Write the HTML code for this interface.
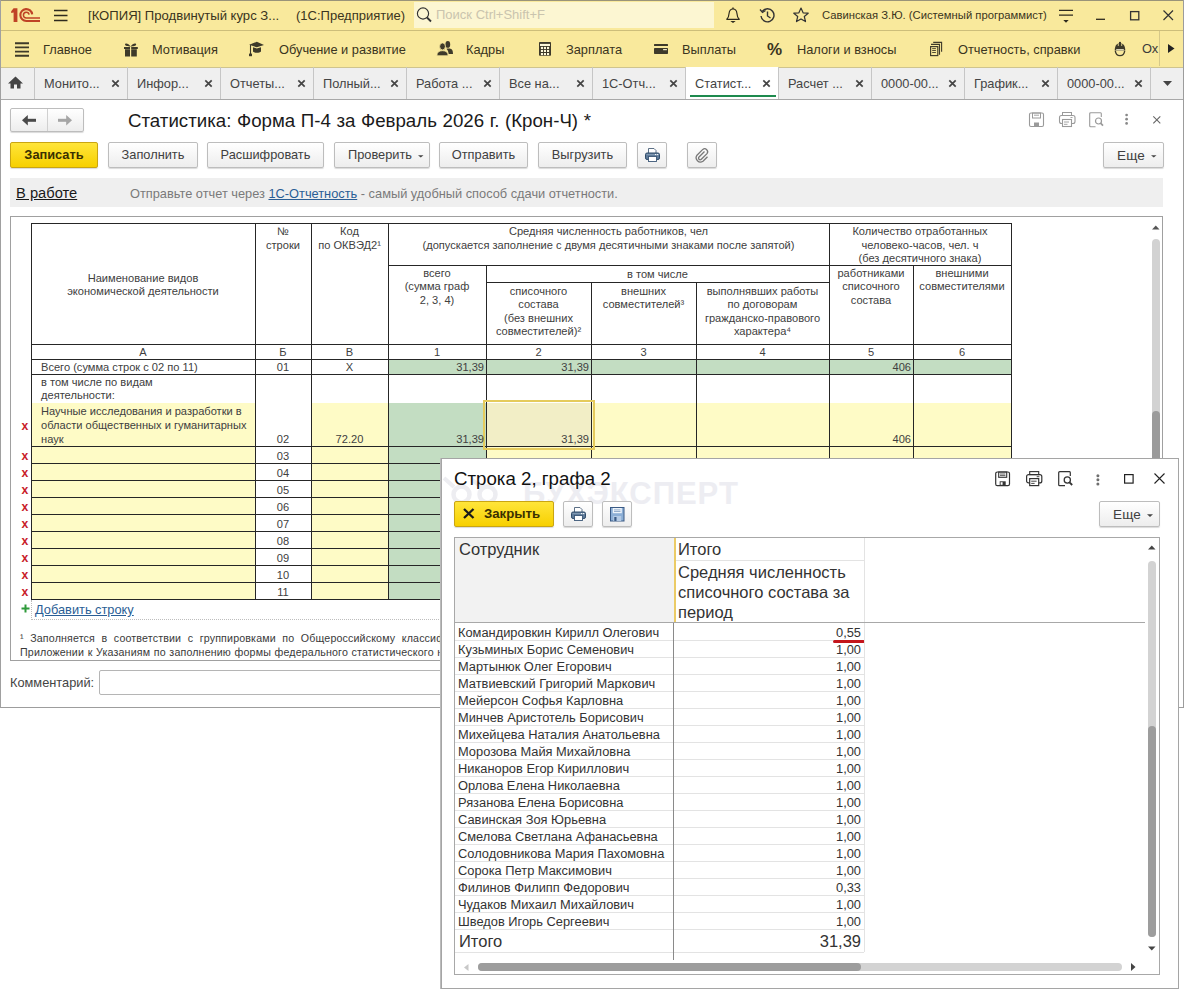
<!DOCTYPE html>
<html><head><meta charset="utf-8">
<style>
*{margin:0;padding:0;box-sizing:border-box}
html,body{width:1184px;height:989px;overflow:hidden;background:#fff;font-family:"Liberation Sans",sans-serif;color:#333}
.a{position:absolute;white-space:nowrap}
svg{position:absolute;overflow:visible}
#titlebar{position:absolute;left:0;top:0;width:1184px;height:31px;background:#F9E99C}
#titlebar::after{content:"";position:absolute;left:0;right:0;top:30px;height:1px;background:#CDBE7A}
#titlebar::before{content:"";position:absolute;left:0;right:0;top:0;height:1px;background:#9A9479}
#menubar{position:absolute;left:0;top:31px;width:1184px;height:36px;background:#F9E99C}
.mi{position:absolute;top:16px;font-size:12.8px;line-height:14px;color:#3a3420;white-space:nowrap}
#tabbar{position:absolute;left:0;top:67px;width:1184px;height:33px;background:#EFEFEF;border-bottom:1px solid #A8A8A8}
#tabbar::before{content:"";position:absolute;left:0;right:0;top:0;height:1px;background:#CFC48E}
.tab{position:absolute;top:0;height:32px;border-left:1px solid #C6C6C6;font-size:12.8px;color:#444}
.tab span{position:absolute;left:9px;top:9px;white-space:nowrap}
.tab svg{left:76px;top:12px}
.btn{position:absolute;height:25px;border:1px solid #BDBDBD;border-radius:2px;background:linear-gradient(#FFFFFF,#EDEDED);box-shadow:0 1px 1px rgba(0,0,0,0.15);font-size:12.8px;color:#404040;text-align:center;line-height:23px;white-space:nowrap}
.ybtn{background:linear-gradient(#FFE53A,#F7D000);border-color:#C9A512;color:#3A3000;font-weight:bold}
#main{position:absolute;left:0;top:100px;width:1184px;height:608px}
#main::before{content:"";position:absolute;left:0;top:0;width:1px;height:608px;background:#9D9D9D}
#main::after{content:"";position:absolute;left:0;top:607px;width:1184px;height:1px;background:#9D9D9D}
.t{position:absolute;font-size:11.1px;line-height:14px;color:#404040;white-space:nowrap}
.hl{position:absolute;height:1px;background:#222}
.vl{position:absolute;width:1px;background:#222}
.g{position:absolute;background:#C5DDC5}
.y{position:absolute;background:#FEFBC5}
.rx{position:absolute;left:21px;font-size:13px;font-weight:bold;color:#C8262A;line-height:12px}
</style></head><body>

<!-- ============ TITLE BAR ============ -->
<div id="titlebar">
  <svg style="left:0;top:0" width="45" height="30" viewBox="0 0 45 30">
    <path d="M13.6 8.2H17.4V22H13.6V12.6L11.2 13V11.2Z" fill="#BF4326"/>
    <path d="M32.2 14.3 A5.95 5.95 0 1 0 26.3 21 H40" fill="none" stroke="#BF4326" stroke-width="2.1"/>
    <path d="M29.1 14.6 A2.85 2.85 0 1 0 26.3 17.9 H40" fill="none" stroke="#BF4326" stroke-width="1.5"/>
  </svg>
  <svg style="left:54px;top:9px" width="14" height="13"><path d="M0 1.5H13.5M0 6.5H13.5M0 11.5H13.5" stroke="#2e2a1e" stroke-width="1.3"/></svg>
  <div class="a" style="left:88px;top:8px;font-size:13.1px;color:#3a3420">[КОПИЯ] Продвинутый курс З...</div>
  <div class="a" style="left:296px;top:8px;font-size:13px;color:#3a3420">(1С:Предприятие)</div>
  <div class="a" style="left:414px;top:2px;width:300px;height:26px;background:#FCF6D2"></div>
  <svg style="left:416px;top:6px" width="18" height="18"><circle cx="7" cy="7.5" r="5.6" fill="none" stroke="#333" stroke-width="1.15"/><path d="M11 11.5L15 15.5" stroke="#333" stroke-width="1.8"/></svg>
  <div class="a" style="left:436px;top:7px;font-size:13px;color:#CAC4AE">Поиск Ctrl+Shift+F</div>
  <!-- bell -->
  <svg style="left:726px;top:7px" width="16" height="17"><path d="M0.8 12.3 C2.8 10.5 2.9 9 3.1 6.2 C3.4 3 5 2 7 2 C9 2 10.6 3 10.9 6.2 C11.1 9 11.2 10.5 13.2 12.3 Z" fill="none" stroke="#2e2a1e" stroke-width="1.2" stroke-linejoin="round"/><path d="M7 0.5V2" stroke="#2e2a1e" stroke-width="1.4"/><path d="M4.3 14 H9.7 L7 15.9 Z" fill="#2e2a1e"/></svg>
  <!-- history -->
  <svg style="left:759px;top:7px" width="17" height="17"><path d="M3.2 4.5 A6.5 6.5 0 1 1 2 9" fill="none" stroke="#333" stroke-width="1.4"/><path d="M1 2.5 L3.5 5.5 L6.5 3.5" fill="none" stroke="#333" stroke-width="1.3"/><path d="M8.5 4.5V9L11.5 11" fill="none" stroke="#333" stroke-width="1.4"/></svg>
  <!-- star -->
  <svg style="left:793px;top:7px" width="17" height="17"><path d="M8 1 L10.1 5.8 L15.2 6.2 L11.3 9.5 L12.5 14.6 L8 11.9 L3.5 14.6 L4.7 9.5 L0.8 6.2 L5.9 5.8 Z" fill="none" stroke="#333" stroke-width="1.2" stroke-linejoin="round"/></svg>
  <div class="a" style="left:822px;top:9px;font-size:11.25px;color:#3a3420">Савинская З.Ю. (Системный программист)</div>
  <!-- filter -->
  <svg style="left:1059px;top:0px" width="15" height="25"><path d="M0 10.4H14M0 15.2H14" stroke="#2e2a1e" stroke-width="1.25"/><path d="M4.3 20H9.7L7 22.8Z" fill="#2e2a1e"/></svg>
  <svg style="left:1096px;top:0px" width="10" height="25"><path d="M0 19.3H9" stroke="#2e2a1e" stroke-width="1.3"/></svg>
  <svg style="left:1130px;top:11px" width="10" height="10"><rect x="0.6" y="0.6" width="8.2" height="8.2" fill="none" stroke="#333" stroke-width="1.3"/></svg>
  <svg style="left:1163px;top:10px" width="11" height="11"><path d="M0.5 0.5L10 10M10 0.5L0.5 10" stroke="#333" stroke-width="1.2"/></svg>
</div>

<!-- ============ MENU BAR ============ -->
<div id="menubar">
  <svg style="left:15px;top:11px" width="15" height="15"><path d="M0 1.2H14M0 5.4H14M0 9.6H14M0 13.8H14" stroke="#3e3a2a" stroke-width="1.9"/></svg>
  <div class="mi" style="left:43px;top:12px">Главное</div>
  <!-- gift -->
  <svg style="left:123px;top:10px" width="16" height="16"><path d="M1 6H7V8H1Z M8.2 6H14.8V8H8.2Z" fill="#3e3a2a"/><path d="M2 8.3H7V15.5H2Z M8.2 8.3H13.8V15.5H8.2Z" fill="#3e3a2a"/><path d="M7.6 5.5 C5.5 1.8 1.8 1.8 2 3.6 C2.2 5.2 5 5.5 7.6 5.5Z M7.6 5.5 C9.7 1.8 13.4 1.8 13.2 3.6 C13 5.2 10.2 5.5 7.6 5.5Z" fill="#3e3a2a"/></svg>
  <div class="mi" style="left:152px;top:12px">Мотивация</div>
  <!-- cap -->
  <svg style="left:248px;top:10px" width="18" height="17"><path d="M1.2 3.8 L8.8 0.8 L16 4 L8.8 6.3 Z" fill="#3e3a2a"/><path d="M5 6.2 L8.8 7.4 L13 6.2 V10.5 C11.5 12.3 6.5 12.3 5 10.5 Z" fill="#3e3a2a"/><path d="M2.5 3.8V13" stroke="#3e3a2a" stroke-width="1.1"/><path d="M1 12.6H4V15.2H1Z" fill="#3e3a2a"/></svg>
  <div class="mi" style="left:279px;top:12px">Обучение и развитие</div>
  <!-- people -->
  <svg style="left:436px;top:9px" width="19" height="17"><ellipse cx="11.8" cy="4.4" rx="2.4" ry="3.4" fill="#3e3a2a"/><path d="M10.4 8.7 C12 8.5 13.5 8.5 14.5 8.7 C16.2 9 17 10.5 17 13.9 H12.6 C12.4 11.5 11.6 9.8 10.4 8.7Z" fill="#3e3a2a"/><ellipse cx="6.5" cy="6.4" rx="2.9" ry="3.5" fill="#3e3a2a" stroke="#F9E99C" stroke-width="0.8"/><path d="M0.9 15.8 C0.9 12.2 2.8 10.7 6.5 10.7 C10.2 10.7 12.1 12.2 12.1 15.8 Z" fill="#3e3a2a" stroke="#F9E99C" stroke-width="0.8"/></svg>
  <div class="mi" style="left:466px;top:12px">Кадры</div>
  <!-- calc -->
  <svg style="left:539px;top:11px" width="12" height="14"><rect x="0" y="0" width="12" height="13.8" rx="0.8" fill="#3e3a2a"/><rect x="1" y="1.9" width="10" height="2.1" fill="#FDF8D8"/><rect x="1.9" y="4.9" width="2.1" height="2.1" fill="#FDF8D8"/><rect x="4.9" y="4.9" width="2.1" height="2.1" fill="#FDF8D8"/><rect x="8" y="4.9" width="2.1" height="2.1" fill="#FDF8D8"/><rect x="1.9" y="7.9" width="2.1" height="2.1" fill="#FDF8D8"/><rect x="4.9" y="7.9" width="2.1" height="2.1" fill="#FDF8D8"/><rect x="8" y="7.9" width="2.1" height="2.1" fill="#FDF8D8"/><rect x="1.9" y="11" width="2.1" height="2.1" fill="#FDF8D8"/><rect x="4.9" y="11" width="2.1" height="2.1" fill="#FDF8D8"/><rect x="8" y="11" width="2.1" height="2.1" fill="#FDF8D8"/></svg>
  <div class="mi" style="left:566px;top:12px">Зарплата</div>
  <!-- card -->
  <svg style="left:654px;top:13px" width="14" height="10"><rect x="0" y="0" width="14" height="2" rx="0.5" fill="#3e3a2a"/><rect x="0" y="4" width="14" height="6" rx="0.7" fill="#3e3a2a"/><rect x="9.1" y="5.1" width="3.8" height="1.1" fill="#FDF8D8"/></svg>
  <div class="mi" style="left:682px;top:12px">Выплаты</div>
  <div class="mi" style="left:767px;top:10px;font-size:17px;font-weight:bold;line-height:18px">%</div>
  <div class="mi" style="left:797px;top:12px">Налоги и взносы</div>
  <!-- docs -->
  <svg style="left:929px;top:10px" width="15" height="17"><path d="M4.2 1.4H12.6V10.8" fill="none" stroke="#3e3a2a" stroke-width="1.1"/><path d="M2 3.4H10.5V13.7" fill="none" stroke="#3e3a2a" stroke-width="1.1"/><rect x="1.6" y="5.6" width="7.2" height="9" fill="none" stroke="#3e3a2a" stroke-width="1.15"/><path d="M3.2 7.6H6.9M3.2 9.5H6.9M3.2 11.5H6.9" stroke="#3e3a2a" stroke-width="0.9"/></svg>
  <div class="mi" style="left:958px;top:12px">Отчетность, справки</div>
  <!-- helmet -->
  <svg style="left:1114px;top:10px" width="13" height="16"><path d="M0.7 9.6 C0.7 4.6 2.8 2.2 6 2.2 C9.2 2.2 11.3 4.6 11.3 9.6 Z" fill="#3e3a2a"/><path d="M4.3 2.6V5M7.7 2.6V5" stroke="#F9E99C" stroke-width="0.8"/><rect x="5" y="0.9" width="2" height="3" fill="#3e3a2a"/><rect x="2.2" y="8.2" width="7.6" height="1.1" fill="#FDF8D8"/><path d="M1.3 9.8 C1.7 13.2 3.6 14.6 6 14.6 C8.4 14.6 10.3 13.2 10.7 9.8" fill="none" stroke="#3e3a2a" stroke-width="1.3"/></svg>
  <div class="a" style="left:1142px;top:11px;width:17px;overflow:hidden;font-size:12.8px;line-height:14px;color:#3b3b3b">Ох</div>
  <div class="a" style="left:1159px;top:0;width:1px;height:35px;background:#D6C889"></div>
  <svg style="left:1168px;top:13px" width="7" height="10"><path d="M0 0L6.5 4.5L0 9Z" fill="#222"/></svg>
</div>

<!-- ============ TAB BAR ============ -->
<div id="tabbar">
  <svg style="left:8px;top:9px" width="15" height="13"><path d="M7.5 0.5 L15 7.5 H12.5 V12.5 H9 V8.5 H6 V12.5 H2.5 V7.5 H0Z" fill="#444"/></svg>
  <div class="tab" style="left:34px;width:93px"><span>Монито...</span><svg width="9" height="9"><path d="M1.3 1.3L7.7 7.7M7.7 1.3L1.3 7.7" stroke="#444" stroke-width="1.7"/></svg></div>
  <div class="tab" style="left:127px;width:93px"><span>Инфор...</span><svg width="9" height="9"><path d="M1.3 1.3L7.7 7.7M7.7 1.3L1.3 7.7" stroke="#444" stroke-width="1.7"/></svg></div>
  <div class="tab" style="left:220px;width:93px"><span>Отчеты...</span><svg width="9" height="9"><path d="M1.3 1.3L7.7 7.7M7.7 1.3L1.3 7.7" stroke="#444" stroke-width="1.7"/></svg></div>
  <div class="tab" style="left:313px;width:93px"><span>Полный...</span><svg width="9" height="9"><path d="M1.3 1.3L7.7 7.7M7.7 1.3L1.3 7.7" stroke="#444" stroke-width="1.7"/></svg></div>
  <div class="tab" style="left:406px;width:93px"><span>Работа ...</span><svg width="9" height="9"><path d="M1.3 1.3L7.7 7.7M7.7 1.3L1.3 7.7" stroke="#444" stroke-width="1.7"/></svg></div>
  <div class="tab" style="left:499px;width:93px"><span>Все на...</span><svg width="9" height="9"><path d="M1.3 1.3L7.7 7.7M7.7 1.3L1.3 7.7" stroke="#444" stroke-width="1.7"/></svg></div>
  <div class="tab" style="left:592px;width:93px"><span>1С-Отч...</span><svg width="9" height="9"><path d="M1.3 1.3L7.7 7.7M7.7 1.3L1.3 7.7" stroke="#444" stroke-width="1.7"/></svg></div>
  <div class="tab" style="left:685px;width:93px;background:#fff"><span>Статист...</span><svg width="9" height="9"><path d="M1.3 1.3L7.7 7.7M7.7 1.3L1.3 7.7" stroke="#444" stroke-width="1.7"/></svg><div class="a" style="left:4px;top:28px;width:86px;height:2px;background:#1E8A4E"></div></div>
  <div class="tab" style="left:778px;width:93px"><span>Расчет ...</span><svg width="9" height="9"><path d="M1.3 1.3L7.7 7.7M7.7 1.3L1.3 7.7" stroke="#444" stroke-width="1.7"/></svg></div>
  <div class="tab" style="left:871px;width:93px"><span>0000-00...</span><svg width="9" height="9"><path d="M1.3 1.3L7.7 7.7M7.7 1.3L1.3 7.7" stroke="#444" stroke-width="1.7"/></svg></div>
  <div class="tab" style="left:964px;width:93px"><span>График...</span><svg width="9" height="9"><path d="M1.3 1.3L7.7 7.7M7.7 1.3L1.3 7.7" stroke="#444" stroke-width="1.7"/></svg></div>
  <div class="tab" style="left:1057px;width:93px"><span>0000-00...</span><svg width="9" height="9"><path d="M1.3 1.3L7.7 7.7M7.7 1.3L1.3 7.7" stroke="#444" stroke-width="1.7"/></svg></div>
  <div class="tab" style="left:1150px;width:32px"><svg style="left:12px;top:14px" width="9" height="6"><path d="M0 0H9L4.5 5Z" fill="#444"/></svg></div>
</div>

<div class="a" style="left:0;top:0;width:1px;height:708px;background:#A0A0A0;z-index:5"></div>
<div class="a" style="left:1183px;top:0;width:1px;height:708px;background:#9C9C9C;z-index:5"></div>
<!-- ============ MAIN FORM ============ -->
<div id="main">
  <!-- nav -->
  <div class="btn" style="left:10px;top:8px;width:74px;height:24px"></div>
  <div class="a" style="left:47px;top:9px;width:1px;height:22px;background:#D0D0D0"></div>
  <svg style="left:22px;top:15px" width="15" height="11"><path d="M14 5.3H4" stroke="#4a4a4a" stroke-width="3"/><path d="M0 5.3L5.8 0V10.6Z" fill="#4a4a4a"/></svg>
  <svg style="left:58px;top:15px" width="15" height="11"><path d="M0 5.3H10" stroke="#A5A5A5" stroke-width="3"/><path d="M14 5.3L8.2 0V10.6Z" fill="#A5A5A5"/></svg>
  <div class="a" style="left:128px;top:10px;font-size:18.7px;word-spacing:0.4px;color:#1a1a1a">Статистика: Форма П-4 за Февраль 2026 г. (Крон-Ч) *</div>
  <!-- right icons -->
  <svg style="left:1029px;top:12px" width="16" height="16"><rect x="0.5" y="1" width="14" height="13.5" rx="1.5" fill="none" stroke="#9a9a9a" stroke-width="1.1"/><rect x="3.5" y="1" width="8" height="5" fill="none" stroke="#9a9a9a" stroke-width="1"/><path d="M5 3.2H10" stroke="#9a9a9a" stroke-width="0.9"/><rect x="5" y="10.5" width="5" height="4" fill="#9a9a9a"/></svg>
  <svg style="left:1059px;top:12px" width="17" height="16"><rect x="3.5" y="0.5" width="9" height="3" fill="none" stroke="#9a9a9a" stroke-width="1"/><rect x="0.5" y="3.5" width="15.5" height="8" rx="2" fill="none" stroke="#9a9a9a" stroke-width="1.1"/><rect x="3.5" y="7.5" width="9" height="7" fill="#fff" stroke="#9a9a9a" stroke-width="1.1"/><path d="M5 10H10M5 12.3H8.5M11.5 5.5H13.5" stroke="#9a9a9a" stroke-width="0.9"/></svg>
  <svg style="left:1089px;top:12px" width="16" height="16"><path d="M12.3 5V1.5A1 1 0 0 0 11.3 0.7H1.7A1 1 0 0 0 0.7 1.7V13.7A1 1 0 0 0 1.7 14.7H6.5" fill="none" stroke="#9a9a9a" stroke-width="1.1"/><circle cx="9.5" cy="9" r="3" fill="none" stroke="#9a9a9a" stroke-width="1.2"/><path d="M11.6 11.2L14 13.6" stroke="#9a9a9a" stroke-width="1.7"/></svg>
  <svg style="left:1125px;top:13px" width="4" height="12"><circle cx="1.6" cy="2" r="1.35" fill="#888"/><circle cx="1.6" cy="6.2" r="1.35" fill="#888"/><circle cx="1.6" cy="10.4" r="1.35" fill="#888"/></svg>
  <svg style="left:1153px;top:16px" width="8" height="8"><path d="M0.3 0.3L7.3 7.3M7.3 0.3L0.3 7.3" stroke="#666" stroke-width="1.1"/></svg>

  <!-- toolbar -->
  <div class="btn ybtn" style="left:10px;top:42px;height:26px;line-height:24px;width:88px">Записать</div>
  <div class="btn" style="left:108px;top:42px;height:26px;line-height:24px;width:90px">Заполнить</div>
  <div class="btn" style="left:207px;top:42px;height:26px;line-height:24px;width:117px">Расшифровать</div>
  <div class="btn" style="left:334px;top:42px;height:26px;line-height:24px;width:96px;text-align:left;padding-left:13px">Проверить</div>
  <svg style="left:417.5px;top:55px" width="6" height="4"><path d="M0 0.2H5.5L2.75 2.6Z" fill="#444"/></svg>
  <div class="btn" style="left:439px;top:42px;height:26px;line-height:24px;width:89px">Отправить</div>
  <div class="btn" style="left:538px;top:42px;height:26px;line-height:24px;width:89px">Выгрузить</div>
  <div class="btn" style="left:637px;top:42px;height:26px;line-height:24px;width:30px"></div>
  <svg style="left:645px;top:48px" width="16" height="15"><path d="M3.5 0.5H9L11 2.5V5.5H3.5Z" fill="#fff" stroke="#4A6078" stroke-width="0.9"/><rect x="0.5" y="5" width="14" height="6.5" rx="1.6" fill="#5F7B99" stroke="#2F4B69" stroke-width="1"/><path d="M1.5 6.6H13.5" stroke="#8DA3BA" stroke-width="0.8"/><rect x="10" y="6.1" width="1.2" height="1" fill="#fff"/><rect x="12" y="6.1" width="1.2" height="1" fill="#fff"/><rect x="3.5" y="8.5" width="8" height="5" fill="#fff" stroke="#3A5575" stroke-width="0.9"/></svg>
  <div class="btn" style="left:687px;top:42px;height:26px;line-height:24px;width:30px"></div>
  <svg style="left:695px;top:48px" width="14" height="14"><path d="M9.5 3.5 L4 9 A1.6 1.6 0 0 0 6.3 11.3 L12 5.6 A3 3 0 0 0 7.8 1.4 L2 7.2 A4.3 4.3 0 0 0 8 13.2 L12.5 8.7" fill="none" stroke="#777" stroke-width="1.3"/></svg>
  <div class="btn" style="left:1103px;top:42px;height:26px;line-height:25px;width:61px;text-align:left;padding-left:13px;font-size:13.5px;letter-spacing:0.2px">Еще</div>
  <svg style="left:1151px;top:55px" width="6" height="4"><path d="M0 0.2H5.5L2.75 2.6Z" fill="#444"/></svg>

  <!-- status bar -->
  <div class="a" style="left:10px;top:78px;width:1153px;height:29px;background:#EFEFEF"></div>
  <div class="a" style="left:16px;top:85px;font-size:14.7px;color:#1a1a1a;text-decoration:underline">В работе</div>
  <div class="a" style="left:130px;top:86px;font-size:12.8px;color:#7a7a7a">Отправьте отчет через <span style="color:#2A5E95;text-decoration:underline">1С-Отчетность</span> - самый удобный способ сдачи отчетности.</div>

  <!-- spreadsheet box -->
  <div class="a" style="left:10px;top:116px;width:1153px;height:445px;border:1px solid #A0A0A0;overflow:hidden">
    <div id="sheet" class="a" style="left:-11px;top:-217px;width:1184px;height:989px">
<!--SHEET_START-->
<div class="a" style="left:389px;top:360px;width:622px;height:14px;background:#C3DDC2"></div>
<div class="a" style="left:32px;top:403px;width:223px;height:43px;background:#FEFBC6"></div>
<div class="a" style="left:312px;top:403px;width:76px;height:43px;background:#FEFBC6"></div>
<div class="a" style="left:389px;top:403px;width:97px;height:43px;background:#C3DDC2"></div>
<div class="a" style="left:487px;top:403px;width:524px;height:43px;background:#FEFBC6"></div>
<div class="a" style="left:487px;top:403px;width:104px;height:43px;background:#F2EEC6"></div>
<div class="a" style="left:32px;top:447px;width:223px;height:16px;background:#FEFBC6"></div>
<div class="a" style="left:312px;top:447px;width:76px;height:16px;background:#FEFBC6"></div>
<div class="a" style="left:389px;top:447px;width:97px;height:16px;background:#C3DDC2"></div>
<div class="a" style="left:487px;top:447px;width:524px;height:16px;background:#FEFBC6"></div>
<div class="a" style="left:32px;top:464px;width:223px;height:16px;background:#FEFBC6"></div>
<div class="a" style="left:312px;top:464px;width:76px;height:16px;background:#FEFBC6"></div>
<div class="a" style="left:389px;top:464px;width:97px;height:16px;background:#C3DDC2"></div>
<div class="a" style="left:487px;top:464px;width:524px;height:16px;background:#FEFBC6"></div>
<div class="a" style="left:32px;top:481px;width:223px;height:16px;background:#FEFBC6"></div>
<div class="a" style="left:312px;top:481px;width:76px;height:16px;background:#FEFBC6"></div>
<div class="a" style="left:389px;top:481px;width:97px;height:16px;background:#C3DDC2"></div>
<div class="a" style="left:487px;top:481px;width:524px;height:16px;background:#FEFBC6"></div>
<div class="a" style="left:32px;top:498px;width:223px;height:16px;background:#FEFBC6"></div>
<div class="a" style="left:312px;top:498px;width:76px;height:16px;background:#FEFBC6"></div>
<div class="a" style="left:389px;top:498px;width:97px;height:16px;background:#C3DDC2"></div>
<div class="a" style="left:487px;top:498px;width:524px;height:16px;background:#FEFBC6"></div>
<div class="a" style="left:32px;top:515px;width:223px;height:16px;background:#FEFBC6"></div>
<div class="a" style="left:312px;top:515px;width:76px;height:16px;background:#FEFBC6"></div>
<div class="a" style="left:389px;top:515px;width:97px;height:16px;background:#C3DDC2"></div>
<div class="a" style="left:487px;top:515px;width:524px;height:16px;background:#FEFBC6"></div>
<div class="a" style="left:32px;top:532px;width:223px;height:16px;background:#FEFBC6"></div>
<div class="a" style="left:312px;top:532px;width:76px;height:16px;background:#FEFBC6"></div>
<div class="a" style="left:389px;top:532px;width:97px;height:16px;background:#C3DDC2"></div>
<div class="a" style="left:487px;top:532px;width:524px;height:16px;background:#FEFBC6"></div>
<div class="a" style="left:32px;top:549px;width:223px;height:16px;background:#FEFBC6"></div>
<div class="a" style="left:312px;top:549px;width:76px;height:16px;background:#FEFBC6"></div>
<div class="a" style="left:389px;top:549px;width:97px;height:16px;background:#C3DDC2"></div>
<div class="a" style="left:487px;top:549px;width:524px;height:16px;background:#FEFBC6"></div>
<div class="a" style="left:32px;top:566px;width:223px;height:16px;background:#FEFBC6"></div>
<div class="a" style="left:312px;top:566px;width:76px;height:16px;background:#FEFBC6"></div>
<div class="a" style="left:389px;top:566px;width:97px;height:16px;background:#C3DDC2"></div>
<div class="a" style="left:487px;top:566px;width:524px;height:16px;background:#FEFBC6"></div>
<div class="a" style="left:32px;top:583px;width:223px;height:16px;background:#FEFBC6"></div>
<div class="a" style="left:312px;top:583px;width:76px;height:16px;background:#FEFBC6"></div>
<div class="a" style="left:389px;top:583px;width:97px;height:16px;background:#C3DDC2"></div>
<div class="a" style="left:487px;top:583px;width:524px;height:16px;background:#FEFBC6"></div>
<div class="a" style="left:31px;top:223px;width:981px;height:1px;background:#262626"></div>
<div class="a" style="left:388px;top:265px;width:624px;height:1px;background:#262626"></div>
<div class="a" style="left:486px;top:282px;width:344px;height:1px;background:#262626"></div>
<div class="a" style="left:31px;top:344px;width:981px;height:1px;background:#262626"></div>
<div class="a" style="left:31px;top:359px;width:981px;height:1px;background:#262626"></div>
<div class="a" style="left:31px;top:374px;width:981px;height:1px;background:#262626"></div>
<div class="a" style="left:31px;top:446px;width:981px;height:1px;background:#262626"></div>
<div class="a" style="left:31px;top:463px;width:981px;height:1px;background:#262626"></div>
<div class="a" style="left:31px;top:480px;width:981px;height:1px;background:#262626"></div>
<div class="a" style="left:31px;top:497px;width:981px;height:1px;background:#262626"></div>
<div class="a" style="left:31px;top:514px;width:981px;height:1px;background:#262626"></div>
<div class="a" style="left:31px;top:531px;width:981px;height:1px;background:#262626"></div>
<div class="a" style="left:31px;top:548px;width:981px;height:1px;background:#262626"></div>
<div class="a" style="left:31px;top:565px;width:981px;height:1px;background:#262626"></div>
<div class="a" style="left:31px;top:582px;width:981px;height:1px;background:#262626"></div>
<div class="a" style="left:31px;top:599px;width:981px;height:1px;background:#262626"></div>
<div class="a" style="left:31px;top:223px;width:1px;height:377px;background:#262626"></div>
<div class="a" style="left:255px;top:223px;width:1px;height:377px;background:#262626"></div>
<div class="a" style="left:311px;top:223px;width:1px;height:377px;background:#262626"></div>
<div class="a" style="left:388px;top:223px;width:1px;height:377px;background:#262626"></div>
<div class="a" style="left:486px;top:265px;width:1px;height:335px;background:#262626"></div>
<div class="a" style="left:591px;top:282px;width:1px;height:318px;background:#262626"></div>
<div class="a" style="left:696px;top:282px;width:1px;height:318px;background:#262626"></div>
<div class="a" style="left:829px;top:223px;width:1px;height:377px;background:#262626"></div>
<div class="a" style="left:913px;top:265px;width:1px;height:335px;background:#262626"></div>
<div class="a" style="left:1011px;top:223px;width:1px;height:377px;background:#262626"></div>
<div class="a" style="left:483px;top:400px;width:112px;height:50px;border:2px solid #E5CB5C"></div>
<div class="t" style="left:31px;top:270.7px;width:224px;text-align:center">Наименование видов</div>
<div class="t" style="left:31px;top:284.2px;width:224px;text-align:center">экономической деятельности</div>
<div class="t" style="left:255px;top:224.4px;width:56px;text-align:center">№</div>
<div class="t" style="left:255px;top:238.0px;width:56px;text-align:center">строки</div>
<div class="t" style="left:311px;top:224.4px;width:77px;text-align:center">Код</div>
<div class="t" style="left:311px;top:238.0px;width:77px;text-align:center">по ОКВЭД2¹</div>
<div class="t" style="left:388px;top:224.4px;width:441px;text-align:center">Средняя численность работников, чел</div>
<div class="t" style="left:388px;top:238.0px;width:441px;text-align:center">(допускается заполнение с двумя десятичными знаками после запятой)</div>
<div class="t" style="left:829px;top:224.4px;width:182px;text-align:center">Количество отработанных</div>
<div class="t" style="left:829px;top:237.9px;width:182px;text-align:center">человеко-часов, чел. ч</div>
<div class="t" style="left:829px;top:251.4px;width:182px;text-align:center">(без десятичного знака)</div>
<div class="t" style="left:388px;top:265.6px;width:98px;text-align:center">всего</div>
<div class="t" style="left:388px;top:279.1px;width:98px;text-align:center">(сумма граф</div>
<div class="t" style="left:388px;top:292.6px;width:98px;text-align:center">2, 3, 4)</div>
<div class="t" style="left:486px;top:267.1px;width:343px;text-align:center">в том числе</div>
<div class="t" style="left:486px;top:283.6px;width:105px;text-align:center">списочного</div>
<div class="t" style="left:486px;top:297.1px;width:105px;text-align:center">состава</div>
<div class="t" style="left:486px;top:310.6px;width:105px;text-align:center">(без внешних</div>
<div class="t" style="left:486px;top:324.1px;width:105px;text-align:center">совместителей)²</div>
<div class="t" style="left:591px;top:283.6px;width:105px;text-align:center">внешних</div>
<div class="t" style="left:591px;top:297.1px;width:105px;text-align:center">совместителей³</div>
<div class="t" style="left:696px;top:283.6px;width:133px;text-align:center">выполнявших работы</div>
<div class="t" style="left:696px;top:297.1px;width:133px;text-align:center">по договорам</div>
<div class="t" style="left:696px;top:310.6px;width:133px;text-align:center">гражданско-правового</div>
<div class="t" style="left:696px;top:324.1px;width:133px;text-align:center">характера⁴</div>
<div class="t" style="left:829px;top:265.6px;width:84px;text-align:center">работниками</div>
<div class="t" style="left:829px;top:279.1px;width:84px;text-align:center">списочного</div>
<div class="t" style="left:829px;top:292.6px;width:84px;text-align:center">состава</div>
<div class="t" style="left:913px;top:265.6px;width:98px;text-align:center">внешними</div>
<div class="t" style="left:913px;top:279.1px;width:98px;text-align:center">совместителями</div>
<div class="t" style="left:31px;top:345.1px;width:224px;text-align:center">А</div>
<div class="t" style="left:255px;top:345.1px;width:56px;text-align:center">Б</div>
<div class="t" style="left:311px;top:345.1px;width:77px;text-align:center">В</div>
<div class="t" style="left:388px;top:345.1px;width:98px;text-align:center">1</div>
<div class="t" style="left:486px;top:345.1px;width:105px;text-align:center">2</div>
<div class="t" style="left:591px;top:345.1px;width:105px;text-align:center">3</div>
<div class="t" style="left:696px;top:345.1px;width:133px;text-align:center">4</div>
<div class="t" style="left:829px;top:345.1px;width:84px;text-align:center">5</div>
<div class="t" style="left:913px;top:345.1px;width:98px;text-align:center">6</div>
<div class="t" style="left:41px;top:360.1px">Всего (сумма строк с 02 по 11)</div>
<div class="t" style="left:255px;top:360.1px;width:56px;text-align:center">01</div>
<div class="t" style="left:311px;top:360.1px;width:77px;text-align:center">X</div>
<div class="t" style="left:284px;top:360.1px;width:200px;text-align:right">31,39</div>
<div class="t" style="left:389px;top:360.1px;width:200px;text-align:right">31,39</div>
<div class="t" style="left:711px;top:360.1px;width:200px;text-align:right">406</div>
<div class="t" style="left:41px;top:374.6px">в том числе по видам</div>
<div class="t" style="left:41px;top:388.1px">деятельности:</div>
<div class="t" style="left:41px;top:404.0px">Научные исследования и разработки в</div>
<div class="t" style="left:41px;top:418.1px">области общественных и гуманитарных</div>
<div class="t" style="left:41px;top:431.7px">наук</div>
<div class="t" style="left:255px;top:431.7px;width:56px;text-align:center">02</div>
<div class="t" style="left:311px;top:431.7px;width:77px;text-align:center">72.20</div>
<div class="t" style="left:284px;top:431.7px;width:200px;text-align:right">31,39</div>
<div class="t" style="left:389px;top:431.7px;width:200px;text-align:right">31,39</div>
<div class="t" style="left:711px;top:431.7px;width:200px;text-align:right">406</div>
<div class="t" style="left:255px;top:448.6px;width:56px;text-align:center">03</div>
<div class="t" style="left:255px;top:465.6px;width:56px;text-align:center">04</div>
<div class="t" style="left:255px;top:482.6px;width:56px;text-align:center">05</div>
<div class="t" style="left:255px;top:499.6px;width:56px;text-align:center">06</div>
<div class="t" style="left:255px;top:516.6px;width:56px;text-align:center">07</div>
<div class="t" style="left:255px;top:533.6px;width:56px;text-align:center">08</div>
<div class="t" style="left:255px;top:550.6px;width:56px;text-align:center">09</div>
<div class="t" style="left:255px;top:567.6px;width:56px;text-align:center">10</div>
<div class="t" style="left:255px;top:584.6px;width:56px;text-align:center">11</div>
<div class="a" style="left:21.5px;top:419.0px;font-size:12.2px;line-height:14px;font-weight:bold;color:#C8202A">x</div>
<div class="a" style="left:21.5px;top:449.0px;font-size:12.2px;line-height:14px;font-weight:bold;color:#C8202A">x</div>
<div class="a" style="left:21.5px;top:466.0px;font-size:12.2px;line-height:14px;font-weight:bold;color:#C8202A">x</div>
<div class="a" style="left:21.5px;top:483.0px;font-size:12.2px;line-height:14px;font-weight:bold;color:#C8202A">x</div>
<div class="a" style="left:21.5px;top:500.0px;font-size:12.2px;line-height:14px;font-weight:bold;color:#C8202A">x</div>
<div class="a" style="left:21.5px;top:517.0px;font-size:12.2px;line-height:14px;font-weight:bold;color:#C8202A">x</div>
<div class="a" style="left:21.5px;top:534.0px;font-size:12.2px;line-height:14px;font-weight:bold;color:#C8202A">x</div>
<div class="a" style="left:21.5px;top:551.0px;font-size:12.2px;line-height:14px;font-weight:bold;color:#C8202A">x</div>
<div class="a" style="left:21.5px;top:568.0px;font-size:12.2px;line-height:14px;font-weight:bold;color:#C8202A">x</div>
<div class="a" style="left:21.5px;top:585.0px;font-size:12.2px;line-height:14px;font-weight:bold;color:#C8202A">x</div>
<svg style="left:20.5px;top:604px" width="9" height="9"><path d="M4.5 0.5V8.5M0.5 4.5H8.5" stroke="#2E9A3A" stroke-width="2"/></svg>
<div class="a" style="left:35px;top:602px;font-size:12.8px;color:#2A5E95;text-decoration:underline">Добавить строку</div>
<div class="a" style="left:31px;top:600px;width:1120px;height:20px;border-left:1px dotted #BDBDBD;border-bottom:1px dotted #BDBDBD"></div>
<div class="a" style="left:20px;top:631.5px;font-size:10.67px;color:#3a3a3a;letter-spacing:0.15px;word-spacing:3.4px">¹ Заполняется в соответствии с группировками по Общероссийскому классификатору видов экономической деятельности</div>
<div class="a" style="left:20px;top:645.5px;font-size:10.67px;color:#3a3a3a;letter-spacing:0.15px;word-spacing:0.5px">Приложении к Указаниям по заполнению формы федерального статистического наблюдения</div>
<svg style="left:1152px;top:225px" width="8" height="5"><path d="M0 4.5H7.5L3.75 0.5Z" fill="#555"/></svg>
<div class="a" style="left:1152px;top:239px;width:8px;height:430px;border-radius:4px;background:#D2D2D2"></div>
<div class="a" style="left:1152px;top:411px;width:8px;height:258px;border-radius:4px;background:#9B9B9B"></div>
<!--SHEET_END-->
    </div>
  </div>

  <div class="a" style="left:10px;top:575px;font-size:12.8px;color:#444">Комментарий:</div>
  <div class="a" style="left:99px;top:570px;width:1080px;height:25px;border:1px solid #B5B5B5;border-radius:2px;background:#fff"></div>
</div>

<!--POPUP_START-->
<div id="popup" class="a" style="left:441px;top:458px;width:738px;height:531px;background:#fff;border:1px solid #A5A5A5;box-shadow:-1px 0 0 #BBBBBB, 0 1px 0 #BBBBBB">
<div id="pp" class="a" style="left:-442px;top:-459px;width:1184px;height:989px">
<div class="a" style="left:523px;top:476px;font-size:31px;font-weight:bold;color:#EDEDF2;letter-spacing:1px">БУХЭКСПЕРТ</div>
<svg style="left:442px;top:470px" width="60" height="40"><path d="M2 8 L12 17 M30 10 L40 17" stroke="#EDEDF1" stroke-width="4"/><circle cx="19.5" cy="24.5" r="8" fill="none" stroke="#EDEDF1" stroke-width="4.5"/><circle cx="45.5" cy="24.5" r="8" fill="none" stroke="#EDEDF1" stroke-width="4.5"/></svg>
<div class="a" style="left:454px;top:467.5px;font-size:18.7px;color:#111">Строка 2, графа 2</div>
<svg style="left:995px;top:471px" width="16" height="16"><rect x="0.7" y="1" width="13.8" height="13.6" rx="1.6" fill="none" stroke="#333" stroke-width="1.2"/><rect x="3.7" y="1" width="8" height="5.3" fill="none" stroke="#333" stroke-width="1.1"/><path d="M5 3H10.4M5 4.6H10.4" stroke="#333" stroke-width="0.8"/><rect x="4.7" y="10.3" width="6" height="4.3" fill="#333"/><rect x="5.6" y="11.2" width="2" height="2.6" fill="#fff"/></svg>
<svg style="left:1026px;top:471px" width="17" height="16"><rect x="3.7" y="0.6" width="9" height="3" fill="none" stroke="#333" stroke-width="1.1"/><rect x="0.6" y="3.6" width="15.2" height="8.3" rx="2" fill="none" stroke="#333" stroke-width="1.2"/><rect x="3.7" y="7.6" width="9" height="7" fill="#fff" stroke="#333" stroke-width="1.2"/><path d="M5.2 10.2H10.6M5.2 12.4H8.6M10.7 5.7H13.4" stroke="#333" stroke-width="0.9"/></svg>
<svg style="left:1058px;top:471px" width="16" height="16"><path d="M12.3 5V1.5A1 1 0 0 0 11.3 0.7H1.7A1 1 0 0 0 0.7 1.7V13.7A1 1 0 0 0 1.7 14.7H7" fill="none" stroke="#333" stroke-width="1.2"/><circle cx="9.3" cy="9" r="3.1" fill="none" stroke="#333" stroke-width="1.25"/><path d="M11.5 11.3L14.2 14" stroke="#333" stroke-width="1.8"/></svg>
<svg style="left:1095.5px;top:473.5px" width="4" height="12"><circle cx="1.9" cy="1.7" r="1.5" fill="#6f6f6f"/><circle cx="1.9" cy="5.8" r="1.5" fill="#6f6f6f"/><circle cx="1.9" cy="9.9" r="1.5" fill="#6f6f6f"/></svg>
<svg style="left:1124px;top:474px" width="10" height="10"><rect x="0.6" y="0.6" width="8.5" height="8.5" fill="none" stroke="#222" stroke-width="1.2"/></svg>
<svg style="left:1154px;top:473px" width="11" height="11"><path d="M0.5 0.5L10.5 10.5M10.5 0.5L0.5 10.5" stroke="#222" stroke-width="1.1"/></svg>
<div class="btn ybtn" style="left:454px;top:501px;width:100px;height:26px;text-align:left;padding-left:29px;line-height:24px;font-size:13.2px">Закрыть</div>
<svg style="left:463px;top:508px" width="12" height="11"><path d="M1 1L10.5 10M10.5 1L1 10" stroke="#1a1a1a" stroke-width="2.3"/></svg>
<div class="btn" style="left:563px;top:501px;width:30px;height:26px"></div>
<svg style="left:571px;top:507px" width="16" height="15"><path d="M3.5 0.5H9L11 2.5V5.5H3.5Z" fill="#fff" stroke="#4A6078" stroke-width="0.9"/><rect x="0.5" y="5" width="14" height="6.5" rx="1.6" fill="#5F7B99" stroke="#2F4B69" stroke-width="1"/><path d="M1.5 6.6H13.5" stroke="#8DA3BA" stroke-width="0.8"/><rect x="10" y="6.1" width="1.2" height="1" fill="#fff"/><rect x="12" y="6.1" width="1.2" height="1" fill="#fff"/><rect x="3.5" y="8.5" width="8" height="5" fill="#fff" stroke="#3A5575" stroke-width="0.9"/></svg>
<div class="btn" style="left:602px;top:501px;width:30px;height:26px"></div>
<svg style="left:610px;top:507px" width="15" height="15"><rect x="0.5" y="0.5" width="13.5" height="13.5" fill="#8DAFD6" stroke="#3A5A85" stroke-width="1"/><rect x="2.8" y="1" width="9" height="5.2" fill="#EEF4FA"/><path d="M4 2.9H10.5M4 4.5H10.5" stroke="#7E9CC0" stroke-width="0.8"/><rect x="3.2" y="9" width="8" height="5" fill="#B5CBE5"/><rect x="4.3" y="10" width="2.2" height="4" fill="#3A5A85"/></svg>
<div class="btn" style="left:1099px;top:501px;width:61px;height:26px;text-align:left;padding-left:13px;line-height:25px;font-size:13.5px;letter-spacing:0.2px">Еще</div>
<svg style="left:1147px;top:514px" width="6" height="4"><path d="M0 0.2H6L3 3Z" fill="#444"/></svg>
<div class="a" style="left:454px;top:537px;width:706px;height:438px;border:1px solid #A8A8A8"></div>
<div class="a" style="left:455px;top:538px;width:219px;height:85px;background:#F2F2F2"></div>
<div class="a" style="left:674px;top:538px;width:2px;height:85px;background:#EBCB66"></div>
<div class="a" style="left:676px;top:560px;width:188px;height:1px;background:#E3E3E3"></div>
<div class="a" style="left:864px;top:538px;width:1px;height:85px;background:#E3E3E3"></div>
<div class="a" style="left:455px;top:622px;width:690px;height:1px;background:#A8A8A8"></div>
<div class="a" style="left:459px;top:540px;font-size:16.5px;color:#333">Сотрудник</div>
<div class="a" style="left:678px;top:540px;font-size:16.5px;color:#333">Итого</div>
<div class="a" style="left:678px;top:563px;font-size:16.5px;color:#333">Средняя численность</div>
<div class="a" style="left:678px;top:583px;font-size:16.5px;color:#333">списочного состава за</div>
<div class="a" style="left:678px;top:603px;font-size:16.5px;color:#333">период</div>
<div class="a" style="left:455px;top:640px;width:409px;height:1px;background:#E3E3E3"></div>
<div class="a" style="left:458px;top:625px;font-size:12.85px;line-height:16px;color:#333">Командировкин Кирилл Олегович</div>
<div class="a" style="left:760px;top:625px;width:101px;text-align:right;font-size:12.85px;line-height:16px;color:#333">0,55</div>
<div class="a" style="left:455px;top:657px;width:409px;height:1px;background:#E3E3E3"></div>
<div class="a" style="left:458px;top:642px;font-size:12.85px;line-height:16px;color:#333">Кузьминых Борис Семенович</div>
<div class="a" style="left:760px;top:642px;width:101px;text-align:right;font-size:12.85px;line-height:16px;color:#333">1,00</div>
<div class="a" style="left:455px;top:674px;width:409px;height:1px;background:#E3E3E3"></div>
<div class="a" style="left:458px;top:659px;font-size:12.85px;line-height:16px;color:#333">Мартынюк Олег Егорович</div>
<div class="a" style="left:760px;top:659px;width:101px;text-align:right;font-size:12.85px;line-height:16px;color:#333">1,00</div>
<div class="a" style="left:455px;top:691px;width:409px;height:1px;background:#E3E3E3"></div>
<div class="a" style="left:458px;top:676px;font-size:12.85px;line-height:16px;color:#333">Матвиевский Григорий Маркович</div>
<div class="a" style="left:760px;top:676px;width:101px;text-align:right;font-size:12.85px;line-height:16px;color:#333">1,00</div>
<div class="a" style="left:455px;top:708px;width:409px;height:1px;background:#E3E3E3"></div>
<div class="a" style="left:458px;top:693px;font-size:12.85px;line-height:16px;color:#333">Мейерсон Софья Карловна</div>
<div class="a" style="left:760px;top:693px;width:101px;text-align:right;font-size:12.85px;line-height:16px;color:#333">1,00</div>
<div class="a" style="left:455px;top:725px;width:409px;height:1px;background:#E3E3E3"></div>
<div class="a" style="left:458px;top:710px;font-size:12.85px;line-height:16px;color:#333">Минчев Аристотель Борисович</div>
<div class="a" style="left:760px;top:710px;width:101px;text-align:right;font-size:12.85px;line-height:16px;color:#333">1,00</div>
<div class="a" style="left:455px;top:742px;width:409px;height:1px;background:#E3E3E3"></div>
<div class="a" style="left:458px;top:727px;font-size:12.85px;line-height:16px;color:#333">Михейцева Наталия Анатольевна</div>
<div class="a" style="left:760px;top:727px;width:101px;text-align:right;font-size:12.85px;line-height:16px;color:#333">1,00</div>
<div class="a" style="left:455px;top:759px;width:409px;height:1px;background:#E3E3E3"></div>
<div class="a" style="left:458px;top:744px;font-size:12.85px;line-height:16px;color:#333">Морозова Майя Михайловна</div>
<div class="a" style="left:760px;top:744px;width:101px;text-align:right;font-size:12.85px;line-height:16px;color:#333">1,00</div>
<div class="a" style="left:455px;top:776px;width:409px;height:1px;background:#E3E3E3"></div>
<div class="a" style="left:458px;top:761px;font-size:12.85px;line-height:16px;color:#333">Никаноров Егор Кириллович</div>
<div class="a" style="left:760px;top:761px;width:101px;text-align:right;font-size:12.85px;line-height:16px;color:#333">1,00</div>
<div class="a" style="left:455px;top:793px;width:409px;height:1px;background:#E3E3E3"></div>
<div class="a" style="left:458px;top:778px;font-size:12.85px;line-height:16px;color:#333">Орлова Елена Николаевна</div>
<div class="a" style="left:760px;top:778px;width:101px;text-align:right;font-size:12.85px;line-height:16px;color:#333">1,00</div>
<div class="a" style="left:455px;top:810px;width:409px;height:1px;background:#E3E3E3"></div>
<div class="a" style="left:458px;top:795px;font-size:12.85px;line-height:16px;color:#333">Рязанова Елена Борисовна</div>
<div class="a" style="left:760px;top:795px;width:101px;text-align:right;font-size:12.85px;line-height:16px;color:#333">1,00</div>
<div class="a" style="left:455px;top:827px;width:409px;height:1px;background:#E3E3E3"></div>
<div class="a" style="left:458px;top:812px;font-size:12.85px;line-height:16px;color:#333">Савинская Зоя Юрьевна</div>
<div class="a" style="left:760px;top:812px;width:101px;text-align:right;font-size:12.85px;line-height:16px;color:#333">1,00</div>
<div class="a" style="left:455px;top:844px;width:409px;height:1px;background:#E3E3E3"></div>
<div class="a" style="left:458px;top:829px;font-size:12.85px;line-height:16px;color:#333">Смелова Светлана Афанасьевна</div>
<div class="a" style="left:760px;top:829px;width:101px;text-align:right;font-size:12.85px;line-height:16px;color:#333">1,00</div>
<div class="a" style="left:455px;top:861px;width:409px;height:1px;background:#E3E3E3"></div>
<div class="a" style="left:458px;top:846px;font-size:12.85px;line-height:16px;color:#333">Солодовникова Мария Пахомовна</div>
<div class="a" style="left:760px;top:846px;width:101px;text-align:right;font-size:12.85px;line-height:16px;color:#333">1,00</div>
<div class="a" style="left:455px;top:878px;width:409px;height:1px;background:#E3E3E3"></div>
<div class="a" style="left:458px;top:863px;font-size:12.85px;line-height:16px;color:#333">Сорока Петр Максимович</div>
<div class="a" style="left:760px;top:863px;width:101px;text-align:right;font-size:12.85px;line-height:16px;color:#333">1,00</div>
<div class="a" style="left:455px;top:895px;width:409px;height:1px;background:#E3E3E3"></div>
<div class="a" style="left:458px;top:880px;font-size:12.85px;line-height:16px;color:#333">Филинов Филипп Федорович</div>
<div class="a" style="left:760px;top:880px;width:101px;text-align:right;font-size:12.85px;line-height:16px;color:#333">0,33</div>
<div class="a" style="left:455px;top:912px;width:409px;height:1px;background:#E3E3E3"></div>
<div class="a" style="left:458px;top:897px;font-size:12.85px;line-height:16px;color:#333">Чудаков Михаил Михайлович</div>
<div class="a" style="left:760px;top:897px;width:101px;text-align:right;font-size:12.85px;line-height:16px;color:#333">1,00</div>
<div class="a" style="left:455px;top:929px;width:409px;height:1px;background:#E3E3E3"></div>
<div class="a" style="left:458px;top:914px;font-size:12.85px;line-height:16px;color:#333">Шведов Игорь Сергеевич</div>
<div class="a" style="left:760px;top:914px;width:101px;text-align:right;font-size:12.85px;line-height:16px;color:#333">1,00</div>
<div class="a" style="left:833px;top:640px;width:32px;height:3px;background:#C4161C;border-radius:1.5px"></div>
<div class="a" style="left:459px;top:932px;font-size:16.5px;color:#333">Итого</div>
<div class="a" style="left:700px;top:932px;width:161px;text-align:right;font-size:16.5px;color:#333">31,39</div>
<div class="a" style="left:455px;top:952px;width:409px;height:1px;background:#E3E3E3"></div>
<div class="a" style="left:864px;top:623px;width:1px;height:329px;background:#E3E3E3"></div>
<div class="a" style="left:673px;top:623px;width:1px;height:337px;background:#8A8A8A"></div>
<svg style="left:464px;top:964px" width="5" height="7"><path d="M4.5 0L0 3.5L4.5 7Z" fill="#C8C8C8"/></svg>
<div class="a" style="left:478px;top:963px;width:644px;height:8px;border-radius:4px;background:#D3D3D3"></div>
<div class="a" style="left:478px;top:963px;width:383px;height:8px;border-radius:4px;background:#9D9D9D"></div>
<svg style="left:1131px;top:963px" width="5" height="8"><path d="M0 0L4.5 4L0 8Z" fill="#444"/></svg>
<svg style="left:1148px;top:545px" width="8" height="5"><path d="M0 4.5H7.5L3.75 0.5Z" fill="#444"/></svg>
<div class="a" style="left:1148px;top:561px;width:8px;height:376px;border-radius:4px;background:#D3D3D3"></div>
<div class="a" style="left:1148px;top:726px;width:8px;height:211px;border-radius:4px;background:#9D9D9D"></div>
<svg style="left:1148px;top:946px" width="8" height="5"><path d="M0 0.5H7.5L3.75 4.5Z" fill="#444"/></svg>
</div></div>
<!--POPUP_END-->
</body></html>
